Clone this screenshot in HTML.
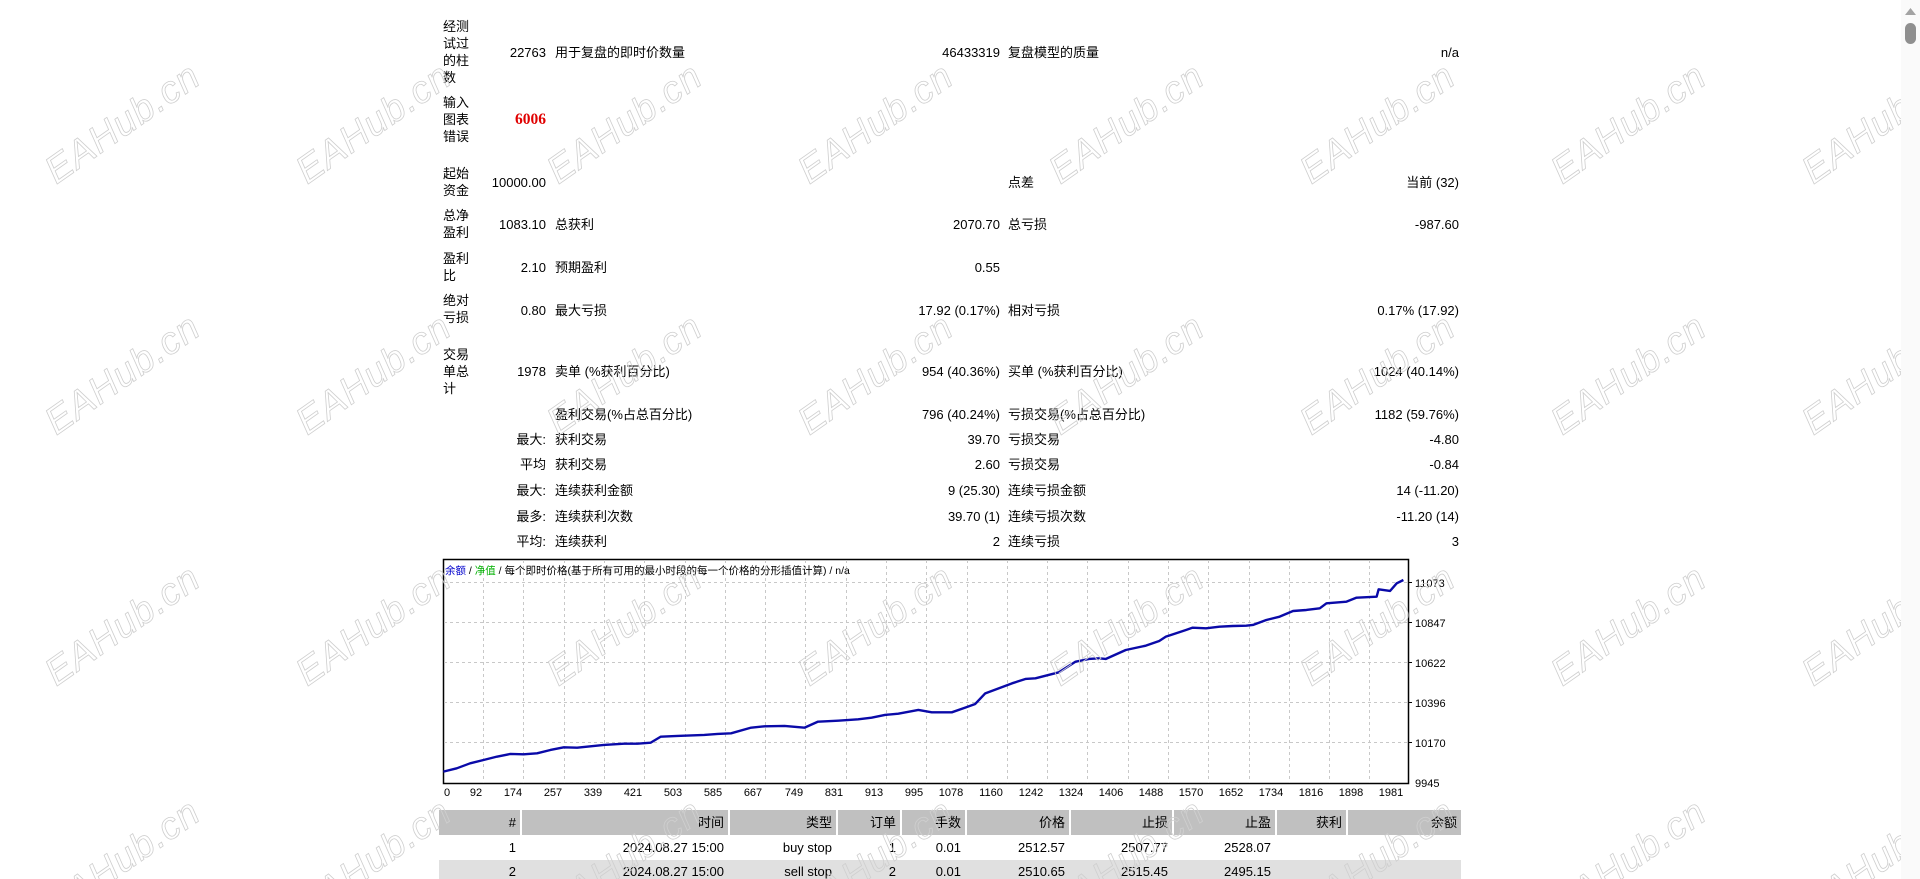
<!DOCTYPE html>
<html><head><meta charset="utf-8">
<style>
html,body{margin:0;padding:0;background:#fff;width:1920px;height:879px;overflow:hidden;font-family:"Liberation Sans","Noto Sans CJK SC",sans-serif;font-size:13px;color:#000}
#w{position:relative;width:1920px;height:879px;overflow:hidden}
.t{position:absolute;white-space:nowrap;line-height:17px}
.r{text-align:right}
.wm{position:absolute;font-family:"Liberation Sans",sans-serif;font-size:38px;font-style:italic;color:transparent;-webkit-text-stroke:0.8px #cfcfcf;transform:translate(-50%,-50%) rotate(-35deg);white-space:nowrap;letter-spacing:1px;pointer-events:none}
.hd{position:absolute;top:810px;height:25px;background:#c0c0c0;line-height:25px;text-align:right;padding-right:4px;box-sizing:border-box;font-size:13px}
.c{position:absolute;height:24px;line-height:24px;text-align:right;padding-right:4px;box-sizing:border-box;font-size:13px}
</style></head><body><div id="w">

<div class="t" style="left:443px;top:18px">经测<br>试过<br>的柱<br>数</div>
<div class="t r" style="left:470px;width:76px;top:44px">22763</div>
<div class="t" style="left:555px;top:44px">用于复盘的即时价数量</div>
<div class="t r" style="left:850px;width:150px;top:44px">46433319</div>
<div class="t" style="left:1008px;top:44px">复盘模型的质量</div>
<div class="t r" style="left:1300px;width:159px;top:44px">n/a</div>

<div class="t" style="left:443px;top:94px">输入<br>图表<br>错误</div>
<div class="t r" style="left:470px;width:76px;top:111px;color:#e00000;font-weight:bold;font-family:'Liberation Serif',serif;font-size:15.5px">6006</div>

<div class="t" style="left:443px;top:165px">起始<br>资金</div>
<div class="t r" style="left:470px;width:76px;top:174px">10000.00</div>
<div class="t" style="left:1008px;top:174px">点差</div>
<div class="t r" style="left:1300px;width:159px;top:174px">当前 (32)</div>

<div class="t" style="left:443px;top:207px">总净<br>盈利</div>
<div class="t r" style="left:470px;width:76px;top:216px">1083.10</div>
<div class="t" style="left:555px;top:216px">总获利</div>
<div class="t r" style="left:850px;width:150px;top:216px">2070.70</div>
<div class="t" style="left:1008px;top:216px">总亏损</div>
<div class="t r" style="left:1300px;width:159px;top:216px">-987.60</div>

<div class="t" style="left:443px;top:250px">盈利<br>比</div>
<div class="t r" style="left:470px;width:76px;top:259px">2.10</div>
<div class="t" style="left:555px;top:259px">预期盈利</div>
<div class="t r" style="left:850px;width:150px;top:259px">0.55</div>

<div class="t" style="left:443px;top:292px">绝对<br>亏损</div>
<div class="t r" style="left:470px;width:76px;top:302px">0.80</div>
<div class="t" style="left:555px;top:302px">最大亏损</div>
<div class="t r" style="left:850px;width:150px;top:302px">17.92 (0.17%)</div>
<div class="t" style="left:1008px;top:302px">相对亏损</div>
<div class="t r" style="left:1300px;width:159px;top:302px">0.17% (17.92)</div>

<div class="t" style="left:443px;top:346px">交易<br>单总<br>计</div>
<div class="t r" style="left:470px;width:76px;top:363px">1978</div>
<div class="t" style="left:555px;top:363px">卖单 (%获利百分比)</div>
<div class="t r" style="left:850px;width:150px;top:363px">954 (40.36%)</div>
<div class="t" style="left:1008px;top:363px">买单 (%获利百分比)</div>
<div class="t r" style="left:1300px;width:159px;top:363px">1024 (40.14%)</div>

<div class="t" style="left:555px;top:406px">盈利交易(%占总百分比)</div>
<div class="t r" style="left:850px;width:150px;top:406px">796 (40.24%)</div>
<div class="t" style="left:1008px;top:406px">亏损交易(%占总百分比)</div>
<div class="t r" style="left:1300px;width:159px;top:406px">1182 (59.76%)</div>

<div class="t r" style="left:470px;width:76px;top:431px">最大:</div>
<div class="t" style="left:555px;top:431px">获利交易</div>
<div class="t r" style="left:850px;width:150px;top:431px">39.70</div>
<div class="t" style="left:1008px;top:431px">亏损交易</div>
<div class="t r" style="left:1300px;width:159px;top:431px">-4.80</div>

<div class="t r" style="left:470px;width:76px;top:456px">平均</div>
<div class="t" style="left:555px;top:456px">获利交易</div>
<div class="t r" style="left:850px;width:150px;top:456px">2.60</div>
<div class="t" style="left:1008px;top:456px">亏损交易</div>
<div class="t r" style="left:1300px;width:159px;top:456px">-0.84</div>

<div class="t r" style="left:470px;width:76px;top:482px">最大:</div>
<div class="t" style="left:555px;top:482px">连续获利金额</div>
<div class="t r" style="left:850px;width:150px;top:482px">9 (25.30)</div>
<div class="t" style="left:1008px;top:482px">连续亏损金额</div>
<div class="t r" style="left:1300px;width:159px;top:482px">14 (-11.20)</div>

<div class="t r" style="left:470px;width:76px;top:508px">最多:</div>
<div class="t" style="left:555px;top:508px">连续获利次数</div>
<div class="t r" style="left:850px;width:150px;top:508px">39.70 (1)</div>
<div class="t" style="left:1008px;top:508px">连续亏损次数</div>
<div class="t r" style="left:1300px;width:159px;top:508px">-11.20 (14)</div>

<div class="t r" style="left:470px;width:76px;top:533px">平均:</div>
<div class="t" style="left:555px;top:533px">连续获利</div>
<div class="t r" style="left:850px;width:150px;top:533px">2</div>
<div class="t" style="left:1008px;top:533px">连续亏损</div>
<div class="t r" style="left:1300px;width:159px;top:533px">3</div>

<svg style="position:absolute;left:0;top:0" width="1920" height="879">
<rect x="443.5" y="559.5" width="965" height="224" fill="#fff" stroke="#000" stroke-width="1.5"/>
<g stroke="#c8c8c8" stroke-dasharray="3,3" stroke-width="1">
<line x1="444" y1="582.5" x2="1408" y2="582.5"/>
<line x1="444" y1="622.5" x2="1408" y2="622.5"/>
<line x1="444" y1="662.5" x2="1408" y2="662.5"/>
<line x1="444" y1="702.5" x2="1408" y2="702.5"/>
<line x1="444" y1="742.5" x2="1408" y2="742.5"/>
<line x1="483.5" y1="560" x2="483.5" y2="783"/><line x1="523.5" y1="560" x2="523.5" y2="783"/><line x1="564.5" y1="560" x2="564.5" y2="783"/><line x1="604.5" y1="560" x2="604.5" y2="783"/><line x1="644.5" y1="560" x2="644.5" y2="783"/><line x1="685.5" y1="560" x2="685.5" y2="783"/><line x1="725.5" y1="560" x2="725.5" y2="783"/><line x1="765.5" y1="560" x2="765.5" y2="783"/><line x1="805.5" y1="560" x2="805.5" y2="783"/><line x1="846.5" y1="560" x2="846.5" y2="783"/><line x1="886.5" y1="560" x2="886.5" y2="783"/><line x1="926.5" y1="560" x2="926.5" y2="783"/><line x1="967.5" y1="560" x2="967.5" y2="783"/><line x1="1007.5" y1="560" x2="1007.5" y2="783"/><line x1="1047.5" y1="560" x2="1047.5" y2="783"/><line x1="1087.5" y1="560" x2="1087.5" y2="783"/><line x1="1128.5" y1="560" x2="1128.5" y2="783"/><line x1="1168.5" y1="560" x2="1168.5" y2="783"/><line x1="1208.5" y1="560" x2="1208.5" y2="783"/><line x1="1249.5" y1="560" x2="1249.5" y2="783"/><line x1="1289.5" y1="560" x2="1289.5" y2="783"/><line x1="1329.5" y1="560" x2="1329.5" y2="783"/><line x1="1369.5" y1="560" x2="1369.5" y2="783"/>
</g>
<g stroke="#000" stroke-width="1">
<line x1="1408" y1="582.5" x2="1412" y2="582.5"/><line x1="1408" y1="622.5" x2="1412" y2="622.5"/><line x1="1408" y1="662.5" x2="1412" y2="662.5"/><line x1="1408" y1="702.5" x2="1412" y2="702.5"/><line x1="1408" y1="742.5" x2="1412" y2="742.5"/>
</g>
<g transform="translate(430,555) scale(0.669,0.3333)">
<polyline vector-effect="non-scaling-stroke" fill="none" stroke="#0a0aa8" stroke-width="2.4" stroke-linejoin="round"
points="20,650 40,640 60,625 80,615 100,605 120,597 140,598 160,595 180,585 200,577 220,578 240,574 260,570 290,566 310,566 330,563 345,545 370,543 410,540 430,537 450,535 480,518 500,514 530,513 560,518 580,500 610,497 640,493 660,488 680,480 700,476 730,465 750,472 780,472 800,458 815,447 830,415 850,400 870,385 890,372 905,370 940,352 965,320 985,312 1000,310 1010,312 1040,285 1070,272 1090,258 1100,245 1130,225 1140,218 1160,220 1180,215 1200,213 1220,212 1230,210 1250,195 1270,185 1290,168 1310,165 1330,160 1340,145 1370,140 1385,128 1415,125 1418,103 1435,108 1445,85 1455,75"/>
</g>
<g font-family="Liberation Sans, sans-serif" font-size="11" fill="#000">
<text x="1415" y="587">11073</text><text x="1415" y="627">10847</text><text x="1415" y="667">10622</text><text x="1415" y="707">10396</text><text x="1415" y="747">10170</text><text x="1415" y="787">9945</text>
</g>
<g font-family="Liberation Sans, sans-serif" font-size="11" fill="#000" text-anchor="middle">
<text x="447" y="796">0</text><text x="476" y="796">92</text><text x="513" y="796">174</text><text x="553" y="796">257</text><text x="593" y="796">339</text><text x="633" y="796">421</text><text x="673" y="796">503</text><text x="713" y="796">585</text><text x="753" y="796">667</text><text x="794" y="796">749</text><text x="834" y="796">831</text><text x="874" y="796">913</text><text x="914" y="796">995</text><text x="951" y="796">1078</text><text x="991" y="796">1160</text><text x="1031" y="796">1242</text><text x="1071" y="796">1324</text><text x="1111" y="796">1406</text><text x="1151" y="796">1488</text><text x="1191" y="796">1570</text><text x="1231" y="796">1652</text><text x="1271" y="796">1734</text><text x="1311" y="796">1816</text><text x="1351" y="796">1898</text><text x="1391" y="796">1981</text>
</g>
<text x="445" y="574" font-family="Liberation Sans, Noto Sans CJK SC, sans-serif" font-size="10.5"><tspan fill="#0000cc">余额</tspan> / <tspan fill="#00b000">净值</tspan> / 每个即时价格(基于所有可用的最小时段的每一个价格的分形插值计算) / n/a</text>
</svg>

<div class="hd" style="left:439px;width:81px">#</div>
<div class="hd" style="left:522px;width:206px">时间</div>
<div class="hd" style="left:730px;width:106px">类型</div>
<div class="hd" style="left:838px;width:62px">订单</div>
<div class="hd" style="left:902px;width:63px">手数</div>
<div class="hd" style="left:967px;width:102px">价格</div>
<div class="hd" style="left:1071px;width:101px">止损</div>
<div class="hd" style="left:1174px;width:101px">止盈</div>
<div class="hd" style="left:1277px;width:69px">获利</div>
<div class="hd" style="left:1348px;width:113px">余额</div>

<div class="c" style="left:439px;top:836px;width:81px">1</div>
<div class="c" style="left:522px;top:836px;width:206px">2024.08.27 15:00</div>
<div class="c" style="left:730px;top:836px;width:106px">buy stop</div>
<div class="c" style="left:838px;top:836px;width:62px">1</div>
<div class="c" style="left:902px;top:836px;width:63px">0.01</div>
<div class="c" style="left:967px;top:836px;width:102px">2512.57</div>
<div class="c" style="left:1071px;top:836px;width:101px">2507.77</div>
<div class="c" style="left:1174px;top:836px;width:101px">2528.07</div>

<div style="position:absolute;left:439px;top:860px;width:1022px;height:19px;background:#e0e0e0"></div>
<div class="c" style="left:439px;top:860px;width:81px">2</div>
<div class="c" style="left:522px;top:860px;width:206px">2024.08.27 15:00</div>
<div class="c" style="left:730px;top:860px;width:106px">sell stop</div>
<div class="c" style="left:838px;top:860px;width:62px">2</div>
<div class="c" style="left:902px;top:860px;width:63px">0.01</div>
<div class="c" style="left:967px;top:860px;width:102px">2510.65</div>
<div class="c" style="left:1071px;top:860px;width:101px">2515.45</div>
<div class="c" style="left:1174px;top:860px;width:101px">2495.15</div>

<div class="wm" style="left:123px;top:124px">EAHub.cn</div><div class="wm" style="left:374px;top:124px">EAHub.cn</div><div class="wm" style="left:625px;top:124px">EAHub.cn</div><div class="wm" style="left:876px;top:124px">EAHub.cn</div><div class="wm" style="left:1127px;top:124px">EAHub.cn</div><div class="wm" style="left:1378px;top:124px">EAHub.cn</div><div class="wm" style="left:1629px;top:124px">EAHub.cn</div><div class="wm" style="left:1880px;top:124px">EAHub.cn</div>
<div class="wm" style="left:123px;top:375px">EAHub.cn</div><div class="wm" style="left:374px;top:375px">EAHub.cn</div><div class="wm" style="left:625px;top:375px">EAHub.cn</div><div class="wm" style="left:876px;top:375px">EAHub.cn</div><div class="wm" style="left:1127px;top:375px">EAHub.cn</div><div class="wm" style="left:1378px;top:375px">EAHub.cn</div><div class="wm" style="left:1629px;top:375px">EAHub.cn</div><div class="wm" style="left:1880px;top:375px">EAHub.cn</div>
<div class="wm" style="left:123px;top:626px">EAHub.cn</div><div class="wm" style="left:374px;top:626px">EAHub.cn</div><div class="wm" style="left:625px;top:626px">EAHub.cn</div><div class="wm" style="left:876px;top:626px">EAHub.cn</div><div class="wm" style="left:1127px;top:626px">EAHub.cn</div><div class="wm" style="left:1378px;top:626px">EAHub.cn</div><div class="wm" style="left:1629px;top:626px">EAHub.cn</div><div class="wm" style="left:1880px;top:626px">EAHub.cn</div>
<div class="wm" style="left:123px;top:860px">EAHub.cn</div><div class="wm" style="left:374px;top:860px">EAHub.cn</div><div class="wm" style="left:625px;top:860px">EAHub.cn</div><div class="wm" style="left:876px;top:860px">EAHub.cn</div><div class="wm" style="left:1127px;top:860px">EAHub.cn</div><div class="wm" style="left:1378px;top:860px">EAHub.cn</div><div class="wm" style="left:1629px;top:860px">EAHub.cn</div><div class="wm" style="left:1880px;top:860px">EAHub.cn</div>

<div style="position:absolute;left:1901px;top:0;width:19px;height:879px;background:#fafafa"></div>
<svg style="position:absolute;left:1901px;top:0" width="19" height="50"><polygon points="4,15 9.5,8 15,15" fill="#a3a3a3"/><rect x="4" y="23" width="11" height="21" rx="5.5" fill="#8f8f8f"/></svg>
</div></body></html>
